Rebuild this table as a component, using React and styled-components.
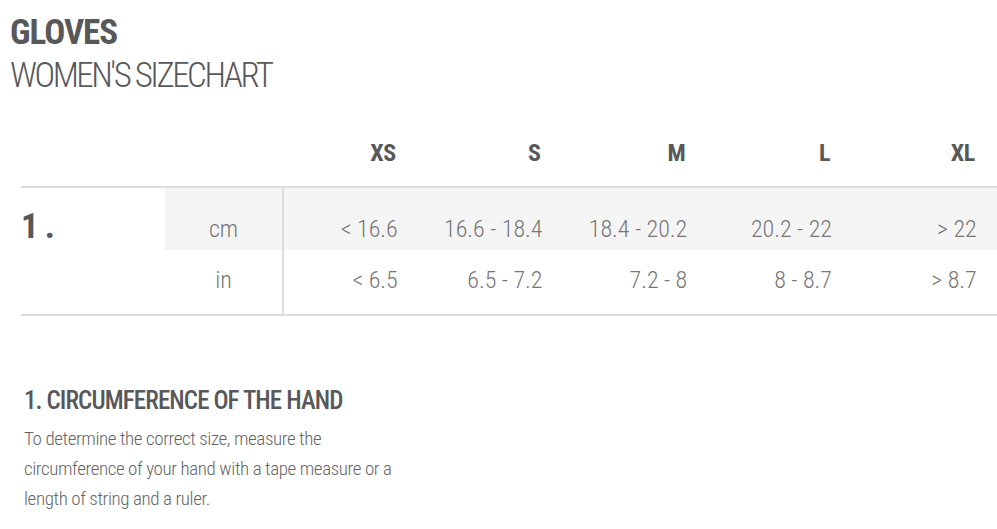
import React from "react";
import styled, { createGlobalStyle } from "styled-components";

const FONT = `"Roboto Condensed", "DejaVu Sans Condensed", "Liberation Sans Narrow", Roboto, sans-serif`;

const GlobalStyle = createGlobalStyle`
  html, body {
    margin: 0;
    padding: 0;
    background: #fff;
    overflow-x: hidden;
  }
  body {
    font-family: ${FONT};
    font-stretch: condensed;
    color: #58585a;
  }
`;

const sizes = ["XS", "S", "M", "L", "XL"];
const rows = [
  { unit: "cm", values: ["< 16.6", "16.6 - 18.4", "18.4 - 20.2", "20.2 - 22", "> 22"], shaded: true },
  { unit: "in", values: ["< 6.5", "6.5 - 7.2", "7.2 - 8", "8 - 8.7", "> 8.7"] },
];

const App = () => {
  return (
    <Page>
      <GlobalStyle />
      <Header>
        <Title>GLOVES</Title>
        <Subtitle>WOMEN'S SIZECHART</Subtitle>
      </Header>

      <Chart>
        <HeadRow>
          <Blank />
          {sizes.map((s) => (
            <SizeLabel key={s}>{s}</SizeLabel>
          ))}
        </HeadRow>
        <Body>
          <Measure>1 .</Measure>
          <Units>
            {rows.map((r) => (
              <UnitCell key={r.unit} $shaded={r.shaded}>
                {r.unit}
              </UnitCell>
            ))}
          </Units>
          <Values>
            {rows.map((r) => (
              <ValueRow key={r.unit} $shaded={r.shaded}>
                {r.values.map((v) => (
                  <Value key={v}>{v}</Value>
                ))}
              </ValueRow>
            ))}
          </Values>
        </Body>
      </Chart>

      <Info>
        <InfoTitle>1. CIRCUMFERENCE OF THE HAND</InfoTitle>
        <InfoText>
          To determine the correct size, measure the circumference of your hand
          with a tape measure or a length of string and a ruler.
        </InfoText>
      </Info>
    </Page>
  );
};

export default App;

const Page = styled.div`
  padding: 11px 0 0 10px;
  width: 1000px;
`;

const Header = styled.div`
  display: flex;
  flex-direction: column;
`;

const Title = styled.h1`
  margin: 0;
  font-size: 35px;
  line-height: 43px;
  font-weight: 700;
  letter-spacing: -1px;
  color: #58585a;
`;

const Subtitle = styled.h2`
  margin: 0;
  font-size: 35px;
  line-height: 43px;
  font-weight: 300;
  letter-spacing: -2.5px;
  color: #58585a;
`;

const Chart = styled.div`
  margin: 36px 0 0 11px;
  width: 1000px;
`;

const HeadRow = styled.div`
  display: grid;
  grid-template-columns: 261px repeat(5, 144.75px);
  height: 55px;
  align-items: end;
  padding-bottom: 21px;
  box-sizing: border-box;
  border-bottom: 2px solid #dedede;
`;

const Blank = styled.div``;

const SizeLabel = styled.div`
  justify-self: end;
  padding-right: 31px;
  font-size: 24px;
  line-height: 24px;
  font-weight: 700;
  letter-spacing: -0.5px;
  color: #58585a;
`;

const Body = styled.div`
  display: grid;
  grid-template-columns: 144px 117px 1fr;
  border-bottom: 2px solid #dedede;
`;

const Measure = styled.div`
  padding-top: 18px;
  font-size: 35px;
  font-weight: 700;
  letter-spacing: -1px;
  color: #58585a;
`;

const Units = styled.div`
  display: flex;
  flex-direction: column;
`;

const UnitCell = styled.div`
  height: ${(p) => (p.$shaded ? "62px" : "64px")};
  display: flex;
  align-items: center;
  justify-content: center;
  padding: ${(p) => (p.$shaded ? "20px 0 0" : "0 0 4px")};
  box-sizing: border-box;
  background: ${(p) => (p.$shaded ? "#f5f5f5" : "transparent")};
  font-size: 24px;
  font-weight: 300;
  color: #777;
`;

const Values = styled.div`
  display: flex;
  flex-direction: column;
  border-left: 2px solid #dedede;
`;

const ValueRow = styled.div`
  display: grid;
  grid-template-columns: repeat(5, 144.75px);
  height: ${(p) => (p.$shaded ? "62px" : "64px")};
  align-items: center;
  padding: ${(p) => (p.$shaded ? "20px 0 0" : "0 0 4px")};
  box-sizing: border-box;
  background: ${(p) => (p.$shaded ? "#f5f5f5" : "transparent")};
`;

const Value = styled.div`
  justify-self: end;
  padding-right: 31px;
  font-size: 24px;
  font-weight: 300;
  color: #777;
`;

const Info = styled.div`
  margin: 70px 0 0 14px;
  width: 370px;
`;

const InfoTitle = styled.h3`
  margin: 0;
  font-size: 25px;
  line-height: 30px;
  font-weight: 500;
  letter-spacing: -0.9px;
  color: #58585a;
`;

const InfoText = styled.p`
  margin: 8px 0 0;
  font-size: 19px;
  line-height: 30px;
  font-weight: 300;
  letter-spacing: -0.4px;
  color: #666;
`;
